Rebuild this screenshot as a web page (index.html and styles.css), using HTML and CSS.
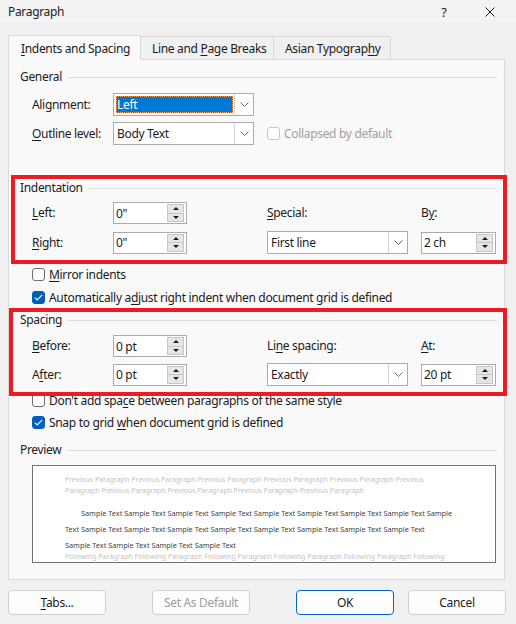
FILE: index.html
```html
<!DOCTYPE html>
<html lang="en">
<head>
    <meta charset="UTF-8">
    <title>Paragraph</title>
    <link rel="stylesheet" href="styles.css">
</head>
<body>
    <div class="titlebar">
        <span class="title">Paragraph</span>
        <span class="help">?</span>
        <span class="close">
            <svg width="10" height="10" viewBox="0 0 10 10"><path d="M0.5 0.5L9.5 9.5M9.5 0.5L0.5 9.5" stroke="#1b1b1b" stroke-width="1"/></svg>
        </span>
    </div>

    <div class="tabs">
        <div class="tab active tab-1"><span><u>I</u>ndents and Spacing</span></div>
        <div class="tab tab-2"><span>Line and <u>P</u>age Breaks</span></div>
        <div class="tab tab-3"><span>Asian Typograp<u>h</u>y</span></div>
    </div>

    <div class="panel">
        <div class="heading">General</div>
        <div class="general-form">
            <span class="label">Ali<u>g</u>nment:</span>
            <div class="select">
                <span class="val selected">Left</span>
                <span class="arrow"><svg width="9" height="5" viewBox="0 0 9 5"><path d="M0.5 0.5L4.5 4.5L8.5 0.5" fill="none" stroke="#6b6b6b"/></svg></span>
            </div>
            <span></span>
            <span></span>

            <span class="label"><u>O</u>utline level:</span>
            <div class="select">
                <span class="val">Body Text</span>
                <span class="arrow"><svg width="9" height="5" viewBox="0 0 9 5"><path d="M0.5 0.5L4.5 4.5L8.5 0.5" fill="none" stroke="#6b6b6b"/></svg></span>
            </div>
            <span></span>
            <label class="check disabled"><span class="box"></span><span>Collapsed by default</span></label>
        </div>

        <div class="marked marked-indent">
            <div class="heading">Indentation</div>
            <div class="grid-form">
                <span class="label"><u>L</u>eft:</span>
                <div class="spin"><span class="val">0"</span><span class="spin-btns"><span class="up"></span><span class="down"></span></span></div>
                <span></span>
                <span class="label"><u>S</u>pecial:</span>
                <span></span>
                <span class="label">B<u>y</u>:</span>

                <span class="label"><u>R</u>ight:</span>
                <div class="spin"><span class="val">0"</span><span class="spin-btns"><span class="up"></span><span class="down"></span></span></div>
                <span></span>
                <div class="select">
                    <span class="val">First line</span>
                    <span class="arrow"><svg width="9" height="5" viewBox="0 0 9 5"><path d="M0.5 0.5L4.5 4.5L8.5 0.5" fill="none" stroke="#6b6b6b"/></svg></span>
                </div>
                <span></span>
                <div class="spin"><span class="val">2 ch</span><span class="spin-btns"><span class="up"></span><span class="down"></span></span></div>
            </div>
        </div>

        <label class="check check-mirror"><span class="box"></span><span><u>M</u>irror indents</span></label>
        <label class="check check-auto"><span class="box checked"><svg width="9" height="7" viewBox="0 0 9 7"><path d="M0.8 3.6L3.2 5.9L8.2 0.9" fill="none" stroke="#fff" stroke-width="1.1"/></svg></span><span>Automatically a<u>d</u>just right indent when document grid is defined</span></label>

        <div class="marked marked-spacing">
            <div class="heading">Spacing</div>
            <div class="grid-form">
                <span class="label"><u>B</u>efore:</span>
                <div class="spin"><span class="val">0 pt</span><span class="spin-btns"><span class="up"></span><span class="down"></span></span></div>
                <span></span>
                <span class="label">Li<u>n</u>e spacing:</span>
                <span></span>
                <span class="label"><u>A</u>t:</span>

                <span class="label">A<u>f</u>ter:</span>
                <div class="spin"><span class="val">0 pt</span><span class="spin-btns"><span class="up"></span><span class="down"></span></span></div>
                <span></span>
                <div class="select">
                    <span class="val">Exactly</span>
                    <span class="arrow"><svg width="9" height="5" viewBox="0 0 9 5"><path d="M0.5 0.5L4.5 4.5L8.5 0.5" fill="none" stroke="#6b6b6b"/></svg></span>
                </div>
                <span></span>
                <div class="spin"><span class="val">20 pt</span><span class="spin-btns"><span class="up"></span><span class="down"></span></span></div>
            </div>
        </div>

        <label class="check check-space"><span class="box"></span><span>Don't add spa<u>c</u>e between paragraphs of the same style</span></label>
        <label class="check check-snap"><span class="box checked"><svg width="9" height="7" viewBox="0 0 9 7"><path d="M0.8 3.6L3.2 5.9L8.2 0.9" fill="none" stroke="#fff" stroke-width="1.1"/></svg></span><span>Snap to grid <u>w</u>hen document grid is defined</span></label>

        <div class="heading preview-heading">Preview</div>
        <div class="preview">
            <div class="prev">Previous Paragraph Previous Paragraph Previous Paragraph Previous Paragraph Previous Paragraph Previous</div>
            <div class="prev">Paragraph Previous Paragraph Previous Paragraph Previous Paragraph Previous Paragraph</div>
            <div class="sample first">Sample Text Sample Text Sample Text Sample Text Sample Text Sample Text Sample Text Sample Text Sample</div>
            <div class="sample">Text Sample Text Sample Text Sample Text Sample Text Sample Text Sample Text Sample Text Sample Text</div>
            <div class="sample">Sample Text Sample Text Sample Text Sample Text</div>
            <div class="next">Following Paragraph Following Paragraph Following Paragraph Following Paragraph Following Paragraph Following</div>
        </div>
    </div>

    <div class="buttons">
        <button class="button btn-tabs"><u>T</u>abs...</button>
        <button class="button btn-default" disabled>Set As Default</button>
        <button class="button btn-ok">OK</button>
        <button class="button btn-cancel">Cancel</button>
    </div>
</body>
</html>
```

FILE: styles.css
```css
body {
    margin: 0;
    background-color: #f0f0f0;
    font-family: "Noto Sans", Arial, sans-serif;
    font-size: 12px;
    letter-spacing: -0.32px;
    color: #1b1b1b;
    width: 516px;
    height: 624px;
    overflow: hidden;
}
u {
    text-decoration-thickness: 1px;
    text-underline-offset: 2px;
}
.titlebar {
    height: 23px;
    display: flex;
    align-items: center;
    padding-left: 8px;
    background-color: #f3f3f3;
}
.title {
    flex: 1;
}
.help {
    width: 46px;
    text-align: center;
    font-size: 13px;
}
.close {
    width: 46px;
    display: flex;
    justify-content: center;
    margin-right: 3px;
}
.tabs {
    display: flex;
    align-items: flex-end;
    height: 24px;
    margin-top: 12px;
    padding-left: 8px;
    position: relative;
    z-index: 1;
}
.tab {
    box-sizing: border-box;
    height: 23px;
    padding-left: 11px;
    border: 1px solid #dadada;
    border-bottom: none;
    background-color: #f0f0f0;
    display: flex;
    align-items: center;
    margin-right: -1px;
}
.tab.active {
    height: 25px;
    margin-bottom: -1px;
    background-color: #f9f9f9;
    padding-left: 12px;
}
.tab-1 { width: 133px; }
.tab-2 { width: 134px; }
.tab-3 { width: 118px; }
.panel {
    width: 497px;
    box-sizing: border-box;
    margin-left: 8px;
    border: 1px solid #dadada;
    background-color: #f9f9f9;
    padding: 9px 7px 16px 11px;
}
.heading {
    display: flex;
    align-items: center;
    height: 16px;
    line-height: 16px;
}
.heading::after {
    content: "";
    flex: 1;
    height: 1px;
    margin-left: 6px;
    background-color: #dcdcdc;
}
.label {
    line-height: 16px;
}
.general-form {
    display: grid;
    grid-template-columns: 81px 141px 13px auto;
    grid-template-rows: 23px 23px;
    row-gap: 6px;
    align-items: center;
    margin: 8px 0 0 12px;
}
.grid-form {
    display: grid;
    grid-template-columns: 81px 74px 80px 141px 13px 75px;
    grid-template-rows: 22px 23px;
    row-gap: 7px;
    align-items: center;
    margin-left: 12px;
}
.select {
    box-sizing: border-box;
    height: 23px;
    border: 1px solid #ababab;
    background-color: #fff;
    display: flex;
}
.select .val {
    flex: 1;
    display: flex;
    align-items: center;
    padding-left: 3px;
}
.select .val.selected {
    margin: 2px 1px 2px 2px;
    padding-left: 1px;
    background-color: #0078d7;
    color: #fff;
    outline: 1px dotted #f7a35c;
    outline-offset: -1px;
}
.arrow {
    width: 18px;
    border-left: 1px solid #d4d4d4;
    display: flex;
    align-items: center;
    justify-content: center;
}
.spin {
    box-sizing: border-box;
    height: 22px;
    border: 1px solid #ababab;
    background-color: #fff;
    display: flex;
    align-items: center;
    padding: 0 2px 0 2px;
}
.spin .val {
    flex: 1;
}
.spin-btns {
    display: flex;
    flex-direction: column;
    width: 17px;
    height: 18px;
}
.spin-btns span {
    flex: 1;
    box-sizing: border-box;
    border: 1px solid #c6c6c6;
    background-color: #e6e6e6;
    display: flex;
    align-items: center;
    justify-content: center;
}
.spin-btns .down {
    border-top: none;
}
.spin-btns .up::before {
    content: "";
    border-left: 3px solid transparent;
    border-right: 3px solid transparent;
    border-bottom: 3px solid #1b1b1b;
}
.spin-btns .down::before {
    content: "";
    border-left: 3px solid transparent;
    border-right: 3px solid transparent;
    border-top: 3px solid #1b1b1b;
}
.marked {
    border: 4px solid #ed1c24;
    position: relative;
}
.marked-indent {
    margin: 30px -10px 0 -9px;
    padding: 1px 6px 6px 5px;
}
.marked-indent .grid-form {
    margin-top: 6px;
}
.marked-spacing {
    margin: 3px -10px -4px -11px;
    padding: 0 6px 6px 7px;
}
.marked-spacing .grid-form {
    margin-top: 7px;
    row-gap: 6px;
}
.check {
    display: flex;
    align-items: center;
    height: 16px;
    margin-left: 12px;
}
.box {
    box-sizing: border-box;
    width: 13px;
    height: 13px;
    border: 1px solid #6e6e6e;
    border-radius: 3px;
    background-color: #fff;
    margin-right: 4px;
    display: flex;
    align-items: center;
    justify-content: center;
}
.box.checked {
    background-color: #005fb8;
    border-color: #005fb8;
}
.check.disabled {
    margin-left: 0;
    color: #a0a0a0;
}
.check.disabled .box {
    border-color: #c8c8c8;
}
.check-mirror { margin-top: 2px; }
.check-auto { margin-top: 7px; }
.check-space { margin-top: 0; }
.check-snap { margin-top: 6px; }
.preview-heading {
    margin-top: 12px;
}
.preview {
    box-sizing: border-box;
    height: 98px;
    margin: 7px 1px 0 12px;
    border: 1px solid #707070;
    background-color: #fff;
    padding: 8px 0 0 32px;
    overflow: hidden;
    font-size: 7px;
    letter-spacing: 0;
    white-space: nowrap;
}
.prev, .next {
    line-height: 11px;
    color: #c3c3c3;
}
.sample {
    font-size: 7.3px;
    line-height: 16px;
    color: #444;
}
.sample.first {
    margin-top: 9px;
    padding-left: 16px;
}
.next {
    margin-top: -2px;
}
.buttons {
    display: flex;
    margin-top: 10px;
    padding-left: 8px;
}
.button {
    width: 98px;
    height: 25px;
    box-sizing: border-box;
    border: 1px solid #d0d0d0;
    border-radius: 4px;
    background-color: #fdfdfd;
    font-family: "Noto Sans", Arial, sans-serif;
    font-size: 12px;
    letter-spacing: -0.32px;
    color: #1b1b1b;
    padding: 0;
}
.btn-default {
    margin-left: 46px;
    color: #9d9d9d;
}
.btn-ok {
    margin-left: 46px;
    border-color: #0067c0;
}
.btn-cancel {
    margin-left: 14px;
}
```
